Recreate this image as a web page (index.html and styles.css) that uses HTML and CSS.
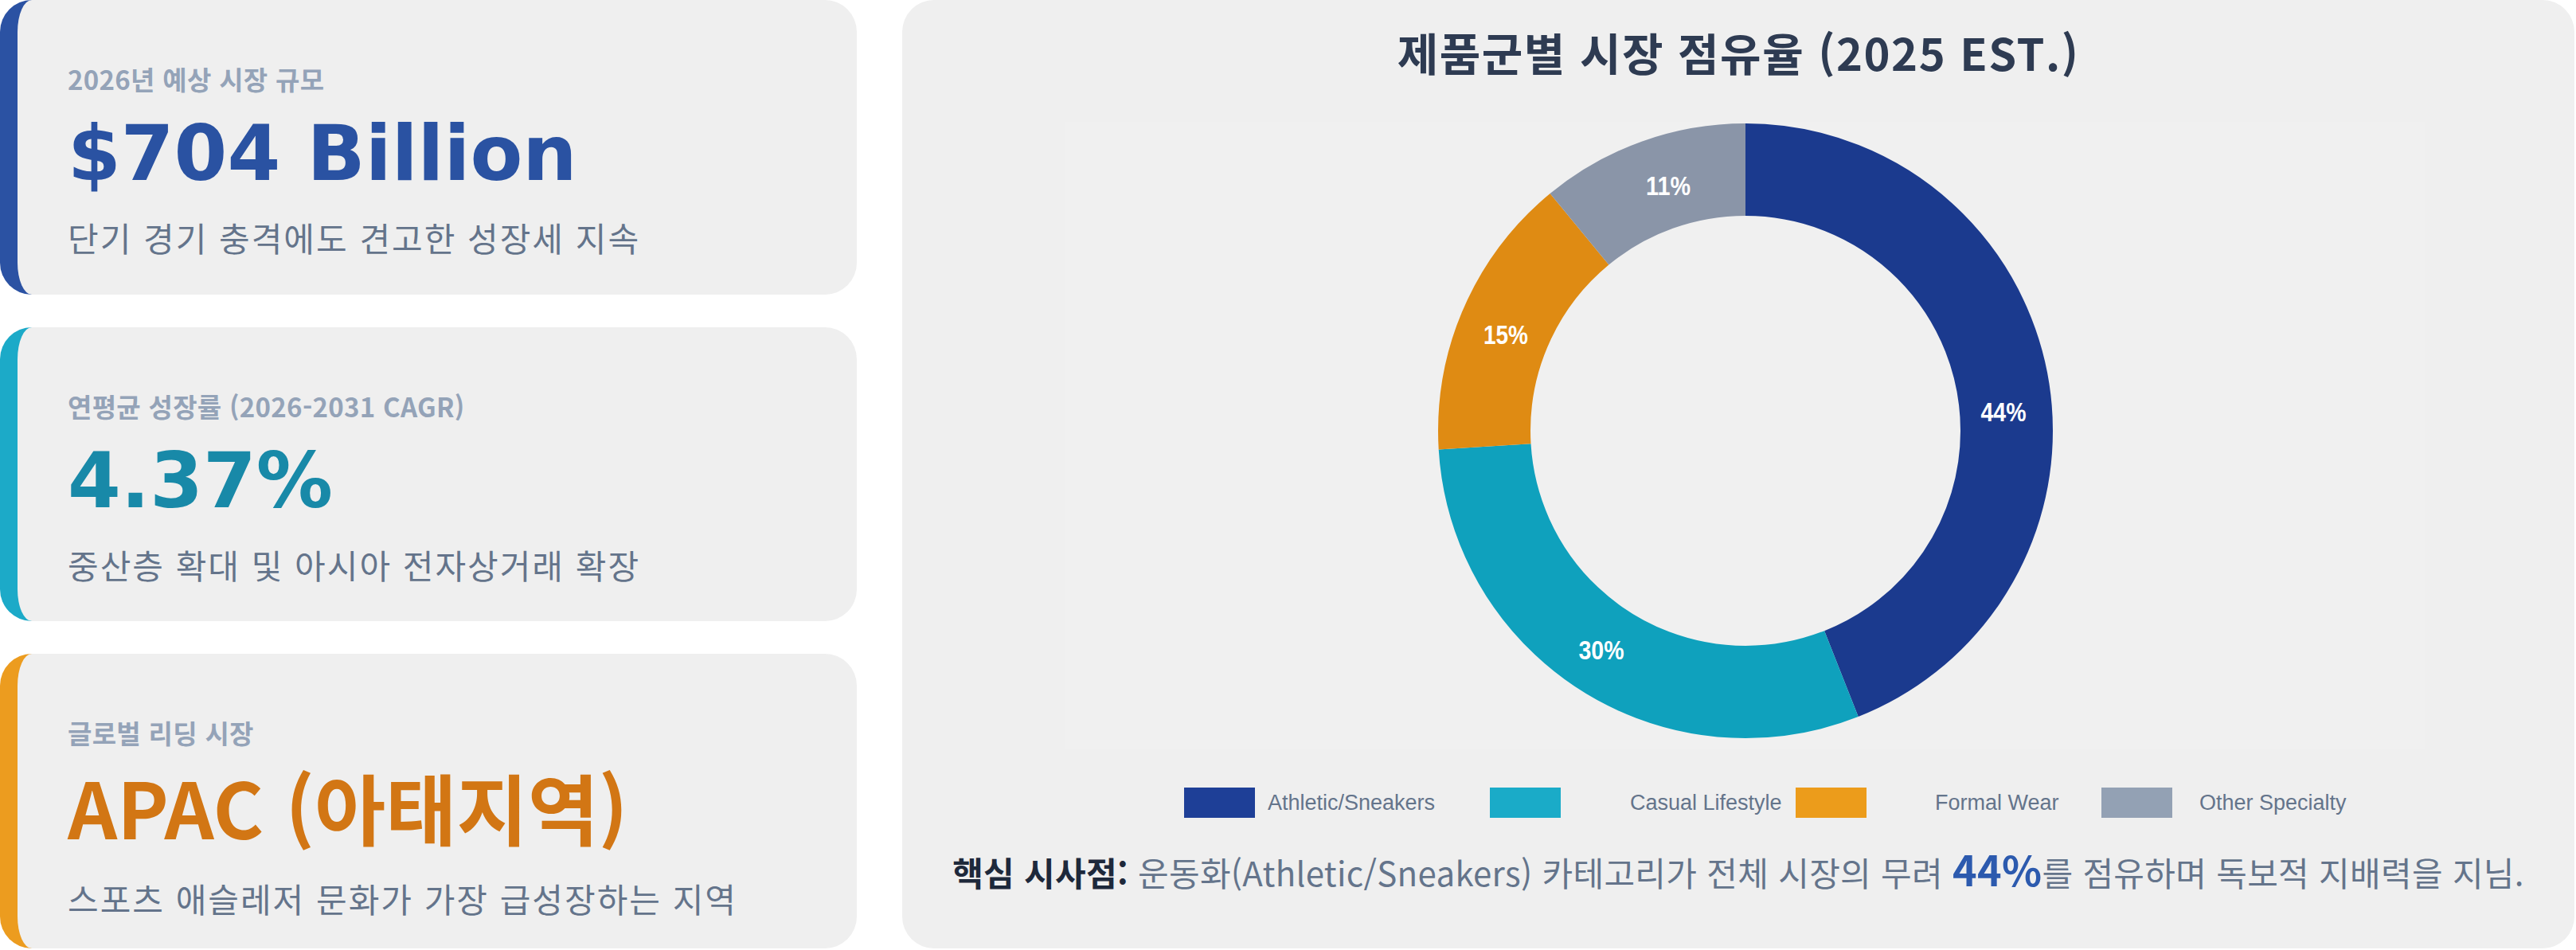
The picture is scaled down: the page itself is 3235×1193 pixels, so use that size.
FILE: index.html
```html
<!DOCTYPE html>
<html lang="ko">
<head>
<meta charset="utf-8">
<title>Footwear Market Dashboard</title>
<link rel="stylesheet" href="styles.css">
</head>
<body>
<div class="page">
  <div class="kpis">
    <section class="card card-blue">
      <div class="label">2026년 예상 시장 규모</div>
      <div class="value">$704 Billion</div>
      <div class="desc">단기 경기 충격에도 견고한 성장세 지속</div>
    </section>
    <section class="card card-teal">
      <div class="label">연평균 성장률 (2026-2031 CAGR)</div>
      <div class="value">4.37%</div>
      <div class="desc">중산층 확대 및 아시아 전자상거래 확장</div>
    </section>
    <section class="card card-orange">
      <div class="label">글로벌 리딩 시장</div>
      <div class="value value-cjk">APAC (아태지역)</div>
      <div class="desc">스포츠 애슬레저 문화가 가장 급성장하는 지역</div>
    </section>
  </div>

  <section class="panel">
    <h2 class="panel-title">제품군별 시장 점유율 (2025 EST.)</h2>
    <div class="chart">
      <svg class="donut" viewBox="0 0 1707 787" width="1707" height="787">
        <g transform="rotate(-90 854 388)" fill="none" stroke-width="116">
          <circle cx="854" cy="388" r="328" stroke="#1b3a8e" stroke-dasharray="906.79 2060.88" stroke-dashoffset="0"/>
          <circle cx="854" cy="388" r="328" stroke="#0fa1bd" stroke-dasharray="618.26 2060.88" stroke-dashoffset="-906.79"/>
          <circle cx="854" cy="388" r="328" stroke="#df8b13" stroke-dasharray="309.13 2060.88" stroke-dashoffset="-1525.05"/>
          <circle cx="854" cy="388" r="328" stroke="#8a95a8" stroke-dasharray="226.70 2060.88" stroke-dashoffset="-1834.18"/>
        </g>
        <g class="donut-labels" text-anchor="middle">
          <text x="1178" y="376" textLength="57" lengthAdjust="spacingAndGlyphs">44%</text>
          <text x="673" y="675" textLength="57" lengthAdjust="spacingAndGlyphs">30%</text>
          <text x="553" y="279" textLength="56" lengthAdjust="spacingAndGlyphs">15%</text>
          <text x="757" y="92" textLength="56" lengthAdjust="spacingAndGlyphs">11%</text>
        </g>
      </svg>
    </div>
    <div class="legend">
      <div class="legend-item">
        <span class="swatch sw-blue"></span><span class="legend-text lt-1">Athletic/Sneakers</span>
      </div>
      <div class="legend-item">
        <span class="swatch sw-teal"></span><span class="legend-text lt-2">Casual Lifestyle</span>
      </div>
      <div class="legend-item">
        <span class="swatch sw-orange"></span><span class="legend-text lt-3">Formal Wear</span>
      </div>
      <div class="legend-item legend-last">
        <span class="swatch sw-grey"></span><span class="legend-text lt-4">Other Specialty</span>
      </div>
    </div>
    <p class="insight"><strong class="insight-key">핵심 시사점:</strong> 운동화(Athletic/Sneakers) 카테고리가 전체 시장의 무려 <strong class="insight-num">44%</strong>를 점유하며 독보적 지배력을 지님.</p>
  </section>
</div>
</body>
</html>
```

FILE: styles.css
```css
* {
  box-sizing: border-box;
}

html, body {
  margin: 0;
  padding: 0;
  background: #ffffff;
}

body {
  font-family: "Noto Sans CJK KR", "Noto Sans", sans-serif;
}

.page {
  display: flex;
  gap: 57px;
  width: 3234px;
  height: 1191px;
}

/* ---------- KPI cards ---------- */
.kpis {
  width: 1076px;
  flex: none;
  display: flex;
  flex-direction: column;
  gap: 41px;
}

.card {
  flex: 1;
  background: #efefef;
  border-left: 22px solid #2b52a3;
  border-radius: 40px;
  padding: 79px 40px 0 63px;
}

.card-blue { border-left-color: #2b52a3; }
.card-teal { border-left-color: #1caac8; }
.card-orange { border-left-color: #ec9c1f; }

.label {
  font-size: 33px;
  line-height: 40px;
  font-weight: 700;
  color: #94a3b8;
  letter-spacing: 0.3px;
}

.value {
  margin-top: 19px;
  font-family: "DejaVu Sans", "Noto Sans CJK KR", sans-serif;
  font-weight: 700;
  font-size: 96px;
  line-height: 110px;
  white-space: nowrap;
}

.card-blue .value { color: #2a52a2; }
.card-teal .value { color: #1889a8; }
.card-orange .value { color: #d27614; }

.value-cjk {
  font-family: "Noto Sans CJK KR", sans-serif;
  font-size: 97px;
  line-height: 140px;
  margin-top: 2px;
  margin-bottom: 18px;
}

.desc {
  margin-top: 22px;
  font-size: 42px;
  line-height: 56px;
  letter-spacing: 2px;
  color: #64748b;
  white-space: nowrap;
}

.value-cjk + .desc {
  margin-top: 0;
}

/* ---------- Chart panel ---------- */
.panel {
  flex: 1;
  margin-right: 1px;
  background: #efefef;
  border-radius: 40px;
  padding-top: 32px;
  display: flex;
  flex-direction: column;
  align-items: center;
}

.panel-title {
  margin: 0;
  font-size: 56px;
  line-height: 66px;
  letter-spacing: 1.5px;
  font-weight: 700;
  color: #2e3b52;
}

.chart {
  margin-top: 55px;
  margin-left: 16px;
  width: 1707px;
  height: 787px;
  background: #f0f0f0;
}

.donut {
  display: block;
}

.donut-labels {
  fill: #ffffff;
  font-family: "Liberation Sans", Arial, sans-serif;
  font-weight: 700;
  font-size: 34px;
}

.legend {
  align-self: stretch;
  margin-top: 49px;
  padding-left: 354px;
  display: flex;
  align-items: center;
  height: 38px;
}

.legend-item {
  width: 384px;
  flex: none;
  display: flex;
  align-items: center;
}

.legend-last {
  width: auto;
}

.swatch {
  width: 89px;
  height: 38px;
  flex: none;
}

.sw-blue { background: #1e3f97; }
.sw-teal { background: #1aabc8; }
.sw-orange { background: #ec9c1b; }
.sw-grey { background: #93a1b4; }

.legend-text {
  font-family: "Liberation Sans", Arial, sans-serif;
  font-size: 27px;
  line-height: 38px;
  color: #64748b;
  white-space: nowrap;
}

.lt-1 { margin-left: 16px; }
.lt-2 { margin-left: 87px; }
.lt-3 { margin-left: 86px; }
.lt-4 { margin-left: 34px; }

.insight {
  margin: 38px 0 0;
  font-size: 42px;
  line-height: 56px;
  letter-spacing: 0.3px;
  color: #64748b;
  white-space: nowrap;
}

.insight-key {
  font-weight: 700;
  color: #1e293b;
}

.insight-num {
  font-weight: 700;
  font-size: 52px;
  line-height: 1;
  color: #2c5aae;
}
```
